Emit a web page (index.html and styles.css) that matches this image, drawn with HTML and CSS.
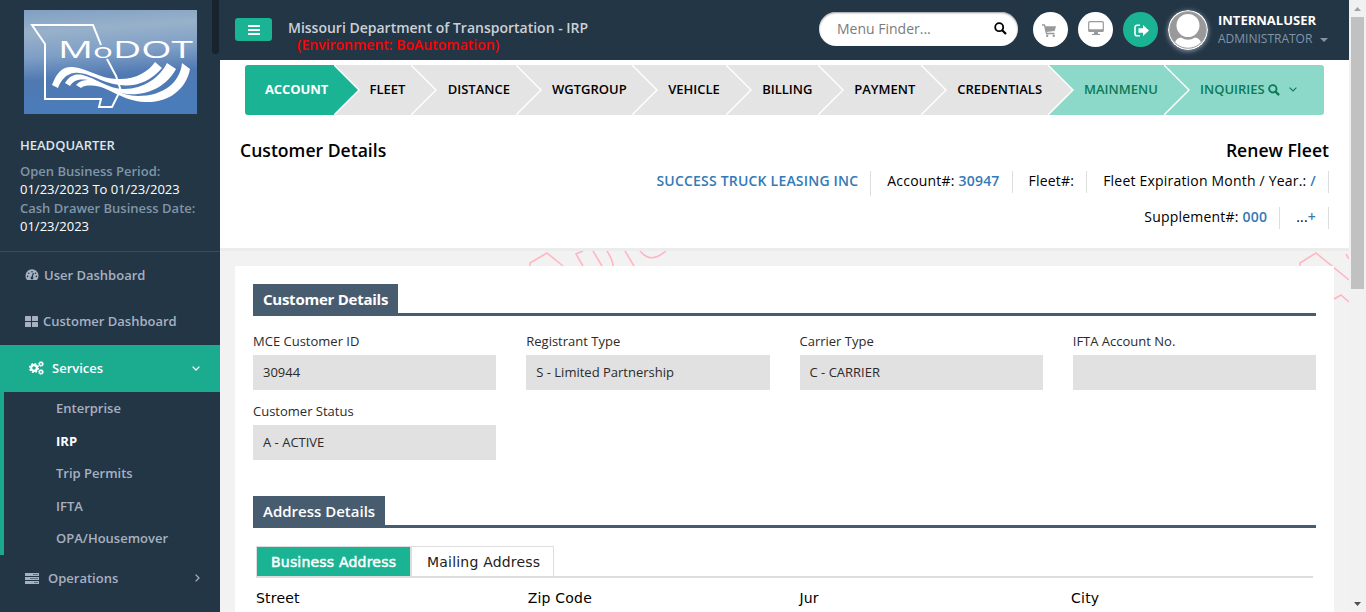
FILE: index.html
```html
<!DOCTYPE html>
<html lang="en">
<head>
<meta charset="utf-8">
<title>Customer Details</title>
<link rel="stylesheet" href="styles.css">
</head>
<body>
<div class="app">
  <aside class="sidebar">
    <span class="side-thumb"></span>
    <svg class="logo" width="173" height="104" viewBox="0 0 173 104" role="img" aria-label="MoDOT">
      <defs>
        <linearGradient id="sky" x1="0" y1="0" x2="0.12" y2="1">
          <stop offset="0" stop-color="#7f9fc2"/><stop offset="0.22" stop-color="#98b1ca"/><stop offset="0.45" stop-color="#7f9fc6"/><stop offset="0.68" stop-color="#5079b2"/><stop offset="1" stop-color="#4a7cba"/>
        </linearGradient>
      </defs>
      <rect width="173" height="104" fill="url(#sky)"/>
      <path d="M77 35 69 15H8L21 34V89H77L75 97H88L95 83 96 78 92 66 83 49" fill="none" stroke="#fff" stroke-width="2"/>
      <text class="logo-text" x="34" y="48" textLength="135" lengthAdjust="spacingAndGlyphs"><tspan font-size="23.5">M</tspan><tspan font-size="20">o</tspan><tspan font-size="23.5">DOT</tspan></text>
      <g fill="#fff">
        <path d="M28 75C33 61 40 56 49 57C65 59 77 69 93 69C111 70 124 62 131 52L138 58C126 72 112 77 95 75C75 72 63 61 50 63C42 64 37 70 34 78Z"/>
        <path d="M41 73C46 65 51 64 57 64.5C73 68 83 79 100 79C120 79 136 67 143 53L152 59C143 76 124 86 103 84C82 81 70 68.5 59 69.5C53 69.5 49 71 46 76Z"/>
        <path d="M52 75C57 70 62 69.5 69 70.5C83 75 96 86 114 86C139 86 156 73 158 53L166 59C162 80 144 93 121 92C96 91 84 75 67 75.5C62 75.5 59 76 57 78Z"/>
      </g>
    </svg>
    <div class="office">
      <div class="office-name"><span>HEADQUARTER</span></div>
      <div class="muted">Open Business Period:</div>
      <div class="date">01/23/2023 To 01/23/2023</div>
      <div class="muted drawer">Cash Drawer Business Date:</div>
      <div class="date">01/23/2023</div>
    </div>
    <nav class="menu">
      <a class="item user">
        <svg width="14" height="12" viewBox="0 0 14 12"><path d="M2 11A6.5 6.5 0 1 1 12 11Z" fill="#a7b1c2"/><path d="M7 9 8.3 4" stroke="#233646" stroke-width="1.1"/><g fill="#233646"><circle cx="7" cy="9" r="1.4"/><circle cx="2.6" cy="7.4" r=".8"/><circle cx="3.8" cy="4.2" r=".8"/><circle cx="7" cy="2.7" r=".8"/><circle cx="10.4" cy="4.2" r=".8"/><circle cx="11.4" cy="7.4" r=".8"/></g></svg>
        <span>User Dashboard</span>
      </a>
      <a class="item customer">
        <svg width="13" height="11" viewBox="0 0 13 11" fill="#a7b1c2"><rect width="6" height="5" rx=".5"/><rect x="7" width="6" height="5" rx=".5"/><rect y="6" width="6" height="5" rx=".5"/><rect x="7" y="6" width="6" height="5" rx=".5"/></svg>
        <span>Customer Dashboard</span>
      </a>
      <a class="item services">
        <svg width="15" height="14" viewBox="0 0 15 14" fill="none" stroke="#fff"><circle cx="5" cy="7" r="2.9" stroke-width="2.2"/><circle cx="5" cy="7" r="4.4" stroke-width="1.4" stroke-dasharray="1.9 1.56"/><circle cx="12" cy="3" r="1.6" stroke-width="1.4"/><circle cx="12" cy="3" r="2.5" stroke-width=".8" stroke-dasharray="1.1 .86"/><circle cx="12" cy="11" r="1.6" stroke-width="1.4"/><circle cx="12" cy="11" r="2.5" stroke-width=".8" stroke-dasharray="1.1 .86"/></svg>
        <span>Services</span>
        <svg class="caret" width="8" height="5" viewBox="0 0 8 5" fill="none" stroke="#fff" stroke-width="1.3"><path d="M.6.6 4 4 7.4.6"/></svg>
      </a>
      <div class="submenu">
        <a>Enterprise</a><a class="current">IRP</a><a>Trip Permits</a><a>IFTA</a><a>OPA/Housemover</a>
      </div>
      <a class="item operations">
        <svg width="14" height="11" viewBox="0 0 14 11"><path d="M0 0H14V3H0ZM0 4H14V7H0ZM0 8H14V11H0Z" fill="#a7b1c2"/><path d="M8 1.5H13M5 5.5H13M9 9.5H13" stroke="#5f7083"/></svg>
        <span>Operations</span>
        <svg class="caret" width="5" height="8" viewBox="0 0 5 8" fill="none" stroke="#a7b1c2" stroke-width="1.3"><path d="M.6.6 4 4 .6 7.4"/></svg>
      </a>
    </nav>
  </aside>

  <main class="main">
    <header class="topbar">
      <button class="burger"><svg width="12" height="10" viewBox="0 0 12 10" stroke="#fff" stroke-width="2"><path d="M0 1H12M0 5H12M0 9H12"/></svg></button>
      <div class="agency"><div class="agency-name"><span>Missouri Department of Transportation - IRP</span></div><div class="env"><span>(Environment: BoAutomation)</span></div></div>
      <div class="search"><span>Menu Finder...</span><svg width="13" height="13" viewBox="0 0 13 13" fill="none" stroke="#000"><circle cx="5.2" cy="5.2" r="4" stroke-width="1.8"/><path d="M8.2 8.2 12 12" stroke-width="2.2"/></svg></div>
      <div class="round cart"><svg width="14" height="13" viewBox="0 0 14 13"><path d="M0 1H2.5L4.5 9.5H12.5" fill="none" stroke="#999" stroke-width="1.3"/><path d="M3 2.3H14L12.7 7 4.2 8Z" fill="#999"/><circle cx="5.2" cy="11.7" r="1.2" fill="#999"/><circle cx="11.8" cy="11.7" r="1.2" fill="#999"/></svg></div>
      <div class="round screen"><svg width="16" height="14" viewBox="0 0 16 14"><rect x=".7" y=".7" width="14.6" height="9.8" rx="1" fill="none" stroke="#999" stroke-width="1.2"/><path d="M1 8.3H15V10.5H1ZM6.3 10.5H9.7L10.2 13H12V14H4V13H5.8Z" fill="#999"/></svg></div>
      <div class="round logout"><svg width="15" height="13" viewBox="0 0 15 13"><path d="M6 1.3H3A2 2 0 0 0 1 3.3V9.7A2 2 0 0 0 3 11.7H6" fill="none" stroke="#fff" stroke-width="1.6"/><path d="M4.5 4.3H9V1L15 6.5 9 12V8.7H4.5Z" fill="#fff"/></svg></div>
      <svg class="avatar" width="40" height="40" viewBox="0 0 40 40"><defs><clipPath id="face"><circle cx="20" cy="20" r="18"/></clipPath></defs><circle cx="20" cy="20" r="20" fill="#fff"/><g clip-path="url(#face)"><rect width="40" height="40" fill="#999"/><circle cx="20" cy="15.5" r="11.5" fill="#fff"/><path d="M5 40C6 31 9 28 13 27.5Q20 32 27 27.5C31 28 34 31 35 40Z" fill="#fff"/></g><circle cx="20" cy="20" r="18.3" fill="none" stroke="#777" stroke-width=".7"/></svg>
      <div class="who"><div class="who-name"><span>INTERNALUSER</span></div><div class="who-role"><span>ADMINISTRATOR</span><svg width="8" height="4" viewBox="0 0 8 4"><path d="M0 0H8L4 4Z" fill="#8095a8"/></svg></div></div>
    </header>

    <section class="summary">
      <nav class="wizard">
        <a class="step on s1"><span>ACCOUNT</span><svg class="tip" viewBox="0 0 26 50"><path class="fill" d="M0 0 25 25 0 50Z"/><path class="edge" d="M0 0 25 25 0 50"/></svg></a>
        <a class="step s2"><span>FLEET</span><svg class="tip" viewBox="0 0 26 50"><path class="fill" d="M0 0 25 25 0 50Z"/><path class="edge" d="M0 0 25 25 0 50"/></svg></a>
        <a class="step s3"><span>DISTANCE</span><svg class="tip" viewBox="0 0 26 50"><path class="fill" d="M0 0 25 25 0 50Z"/><path class="edge" d="M0 0 25 25 0 50"/></svg></a>
        <a class="step s4"><span>WGTGROUP</span><svg class="tip" viewBox="0 0 26 50"><path class="fill" d="M0 0 25 25 0 50Z"/><path class="edge" d="M0 0 25 25 0 50"/></svg></a>
        <a class="step s5"><span>VEHICLE</span><svg class="tip" viewBox="0 0 26 50"><path class="fill" d="M0 0 25 25 0 50Z"/><path class="edge" d="M0 0 25 25 0 50"/></svg></a>
        <a class="step s6"><span>BILLING</span><svg class="tip" viewBox="0 0 26 50"><path class="fill" d="M0 0 25 25 0 50Z"/><path class="edge" d="M0 0 25 25 0 50"/></svg></a>
        <a class="step s7"><span>PAYMENT</span><svg class="tip" viewBox="0 0 26 50"><path class="fill" d="M0 0 25 25 0 50Z"/><path class="edge" d="M0 0 25 25 0 50"/></svg></a>
        <a class="step s8"><span>CREDENTIALS</span><svg class="tip" viewBox="0 0 26 50"><path class="fill" d="M0 0 25 25 0 50Z"/><path class="edge" d="M0 0 25 25 0 50"/></svg></a>
        <a class="step mint s9"><span>MAINMENU</span><svg class="tip" viewBox="0 0 26 50"><path class="fill" d="M0 0 25 25 0 50Z"/><path class="edge" d="M0 0 25 25 0 50"/></svg></a>
        <a class="step mint s10"><span>INQUIRIES</span><svg class="find" width="12" height="12" viewBox="0 0 13 13" fill="none" stroke="#0b7a55"><circle cx="5.2" cy="5.2" r="4" stroke-width="2"/><path d="M8.2 8.2 12 12" stroke-width="2.5"/></svg><svg width="8" height="5" viewBox="0 0 8 5" fill="none" stroke="#0b7a55" stroke-width="1.1"><path d="M.6.6 4 4 7.4.6"/></svg></a>
      </nav>
      <div class="titles"><h1><span>Customer Details</span></h1><h1><span>Renew Fleet</span></h1></div>
      <div class="facts first">
        <div class="fact tall company"><b>SUCCESS TRUCK LEASING INC</b></div>
        <div class="fact account"><span>Account#: <b>30947</b></span></div>
        <div class="fact fleet"><span>Fleet#:</span></div>
        <div class="fact expiry"><span>Fleet Expiration Month / Year.: <b>/</b></span></div>
      </div>
      <div class="facts second">
        <div class="fact supplement"><span>Supplement#: <b>000</b></span></div>
        <div class="fact more"><span>...<b>+</b></span></div>
      </div>
    </section>

    <section class="content">
      <svg class="pattern" width="1129" height="60" viewBox="0 0 1129 60" fill="none" stroke="#ffb6c1" stroke-width="1.6"><path d="M310 15V12L327 2 343 15M363 15 356 3 363 0M373 0 382 15M387 0C390 5 393 9 393 15M405 0 414 15M420 0C427 8 434 10 446 0M1080 15V12L1096 2 1129 29M1126 3 1129 8M1114 48 1121 44 1129 51"/></svg>
      <div class="card">
        <h2><span class="tag details"><span>Customer Details</span></span></h2>
        <div class="fields">
          <label><span class="label">MCE Customer ID</span><span class="value">30944</span></label>
          <label><span class="label">Registrant Type</span><span class="value">S - Limited Partnership</span></label>
          <label><span class="label">Carrier Type</span><span class="value">C - CARRIER</span></label>
          <label><span class="label">IFTA Account No.</span><span class="value"></span></label>
          <label><span class="label">Customer Status</span><span class="value">A - ACTIVE</span></label>
        </div>
        <h2><span class="tag address"><span>Address Details</span></span></h2>
        <div class="tabs"><div class="tab active"><span>Business Address</span></div><div class="tab"><span>Mailing Address</span></div></div>
        <div class="columns"><span>Street</span><span>Zip Code</span><span>Jur</span><span>City</span></div>
      </div>
    </section>
  </main>
  <div class="scrollbar">
    <svg width="17" height="17" viewBox="0 0 17 17"><path d="M5 11 8.5 7 12 11Z" fill="#a3a3a3"/></svg>
    <div class="thumb"></div>
    <svg class="down" width="17" height="17" viewBox="0 0 17 17"><path d="M5 7 8.5 11 12 7Z" fill="#505050"/></svg>
  </div>
</div>
</body>
</html>
```
FILE: styles.css
```css
* { box-sizing: border-box; }
body { margin: 0; overflow: hidden; background: #fff; color: #000; font-family: "Open Sans", "Noto Sans", sans-serif; font-size: 13px; }
svg { display: block; flex: none; }
b { font-weight: 600; color: #337ab7; }
.app { display: flex; width: 1366px; height: 612px; overflow: hidden; white-space: nowrap; }

.sidebar { position: relative; flex: none; width: 220px; background: #233646; color: #a7b1c2; font-weight: 600; }
.side-thumb { position: absolute; top: -4px; right: 1px; width: 7px; height: 58px; border-radius: 4px; background: #17232d; }
.logo { margin: 10px 0 0 24px; }
.logo-text { font-family: "Open Sans", sans-serif; font-weight: 500; fill: #fff; }
.office { height: 137px; padding: 21px 0 0 20px; line-height: 18px; }
.office-name { height: 27px; color: #dfe4ed; line-height: 20px; }
.muted { color: #8095a8; }
.muted.drawer { padding-top: 1px; }
.date { color: #fff; font-weight: 400; }
.menu { border-top: 1px solid #344e5e; }
.item { display: flex; align-items: center; height: 47px; padding: 0 20px 1px 25px; }
.item span { margin-left: 5px; }
.item.user, .item.customer { padding-bottom: 2px; }
.customer { height: 46px; }
.item.services { padding-left: 29px; background: #1bab8f; color: #fff; }
.services span { margin-left: 8px; }
.caret { margin-left: auto; }
.submenu { display: flex; flex-direction: column; height: 163px; border-left: 4px solid #19aa8d; }
.submenu a { height: 32.5px; padding-left: 52px; line-height: 32px; }
.submenu .current { color: #fff; font-weight: 700; }
.operations span { margin-left: 9px; }

.main { flex: none; width: 1129px; }
.topbar { display: flex; align-items: flex-start; height: 60px; padding-left: 15px; background: #233646; }
.burger { display: flex; align-items: center; justify-content: center; width: 37px; height: 23px; margin-top: 18px; padding: 0; border: 0; border-radius: 3px; background: #1ab394; }
.agency { width: 531px; margin: 19px 0 0 16px; font-size: 14px; font-weight: 600; line-height: 17px; color: #ccd0d5; }
.env { padding-left: 9px; color: #f00; }
.search { display: flex; align-items: center; justify-content: space-between; width: 199px; height: 34px; margin-top: 12px; padding: 0 11px 2px 18px; border-radius: 17px; background: #fff; box-shadow: inset 0 1px 2px #999; color: #7b7b7b; font-size: 14px; }
.round { display: flex; align-items: center; justify-content: center; width: 35px; height: 35px; margin: 12px 0 0 10px; border-radius: 50%; background: #fff; }
.cart { margin-left: 15px; padding: 2px 3px 0 0; }
.screen { padding-bottom: 3px; }
.logout { background: #1ab394; padding: 1px 0 0 2px; }
.avatar { margin: 10px 0 0 10px; border-radius: 50%; box-shadow: 0 1px 5px #91a1b0; }
.who { margin: 10px 0 0 10px; color: #fff; font-weight: 700; line-height: 20px; }
.who-role { display: flex; align-items: center; gap: 8px; color: #8095a8; font-size: 12px; font-weight: 400; line-height: 17px; }
.who-role svg { margin-top: 3px; }

.summary { height: 191px; padding: 5px 20px 0; border-bottom: 3px solid #ececec; background: #fff; }
.wizard { display: flex; height: 50px; margin-left: 5px; }
.step { --c: #e4e4e4; position: relative; display: flex; flex: none; align-items: center; padding: 0 0 2px 36.7px; background: var(--c); font-weight: 600; }
.tip { position: absolute; z-index: 1; top: 0; left: 100%; width: 26px; height: 50px; overflow: hidden; }
.fill { fill: var(--c); }
.edge { fill: none; stroke: #fff; stroke-width: 1.4; }
.on { --c: #1ab394; padding-left: 20px; border-radius: 3px 0 0 3px; color: #fff; font-weight: 700; letter-spacing: -.1px; }
.mint { --c: #8cd9c9; padding-left: 36px; color: #0b7a55; }
.s1 { width: 88.5px; } .s2 { width: 77.5px; padding-left: 36px; } .s3 { width: 105px; } .s4 { width: 115.5px; padding-left: 36px; } .s5 { width: 94px; }
.s6 { width: 92px; } .s7 { width: 103px; } .s8 { width: 127.5px; } .s9 { width: 116px; }
.s10 { width: 160px; border-radius: 0 3px 3px 0; }
.find { margin: 1px 9px 0 3px; }
.titles { display: flex; justify-content: space-between; height: 54px; padding-top: 23px; }
h1 { margin: 0; font-size: 17.6px; font-weight: 600; line-height: 24px; }
.facts { display: flex; justify-content: flex-end; height: 36px; padding-top: 2px; font-size: 14px; letter-spacing: .2px; }
.fact { height: 22px; padding: 0 12px 0 16px; border-right: 1px solid #ddd; line-height: 20px; }
.fact.tall { height: 25px; }

.content { position: relative; height: 361px; padding: 15px 15px 0; background: #f2f2f2; }
.pattern { position: absolute; top: 0; left: 0; }
.card { position: relative; height: 346px; padding: 18px; background: #fff; }
h2 { display: flex; height: 32px; margin: 0; border-bottom: 3px solid #485c70; color: #fff; font-size: 15px; font-weight: 600; }
.tag { height: 29px; padding-left: 10px; background: #485c70; line-height: 31px; }
.details { width: 145px; font-weight: 700; letter-spacing: -.25px; }
.address { width: 132px; }
.fields { display: grid; grid-template-columns: repeat(4, 1fr); column-gap: 30px; height: 180px; padding-top: 15px; align-content: start; }
.fields label { height: 70px; color: #2b2b2b; }
.label { display: block; height: 24px; line-height: 20px; }
.value { display: block; height: 35px; padding-left: 10px; background: #e1e1e1; line-height: 35px; }
.tabs { display: flex; height: 32px; margin: 18px 3px 0; border-bottom: 2px solid #ddd; font-family: "DejaVu Sans", sans-serif; font-size: 14px; line-height: 31px; color: #222; letter-spacing: .2px; }
.tab { width: 143px; padding-left: 15px; border: 1px solid #ddd; border-bottom: 0; }
.tab.active { width: 155px; padding-left: 14px; background: #1ab394; background-clip: padding-box; color: #fff; -webkit-text-stroke: .5px #fff; }
.columns { display: grid; grid-template-columns: repeat(4, 271.7px); padding: 10px 3px 0; font-family: "DejaVu Sans", sans-serif; font-size: 14px; line-height: 20px; letter-spacing: .2px; }

.scrollbar { display: flex; flex: none; flex-direction: column; width: 17px; background: #f1f1f1; }
.thumb { width: 13px; height: 272px; margin-left: 2px; background: #c1c1c1; }
.down { margin-top: auto; }
```
